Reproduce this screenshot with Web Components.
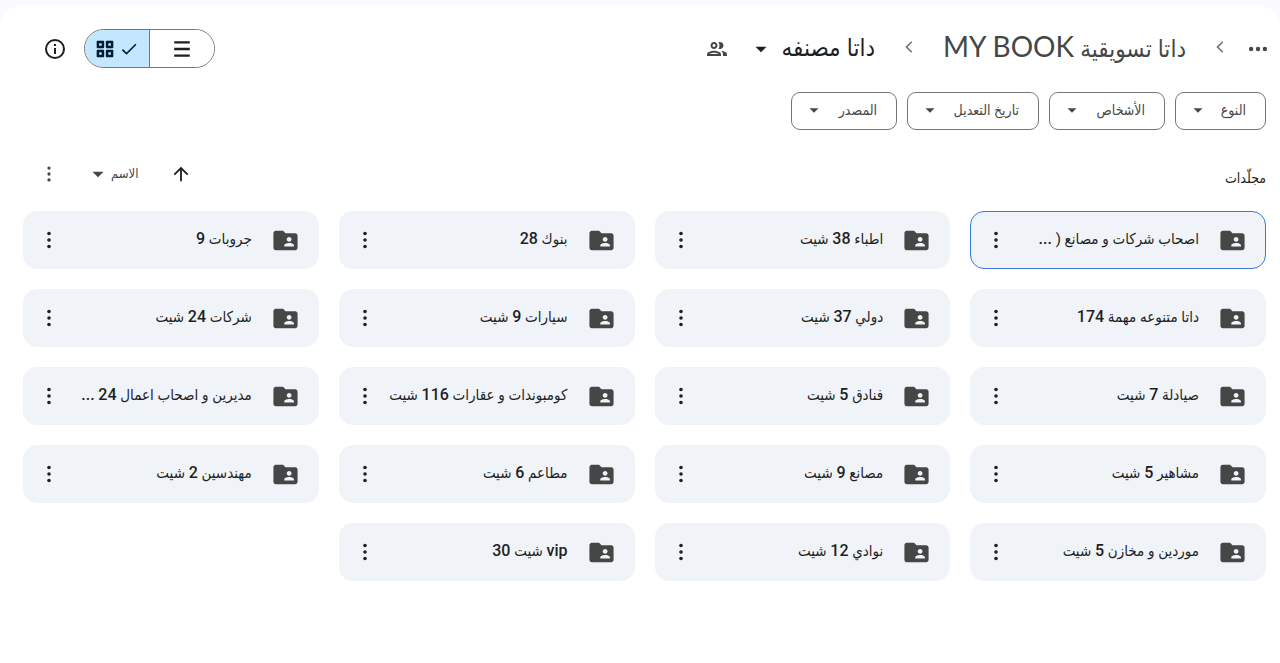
<!DOCTYPE html>
<html lang="ar" dir="rtl">
<head>
<meta charset="utf-8">
<meta name="viewport" content="width=device-width, initial-scale=1">
<title>داتا مصنفه</title>
<style>
  body { margin: 0; background: #f8fafd; color: #1f1f1f; font-family: Roboto, "DejaVu Sans Condensed", "DejaVu Sans", sans-serif; }
</style>
</head>
<body>
<drive-page></drive-page>
<script>
const ICONS = {
  more: '<circle cx="12" cy="5.5" r="1.8"/><circle cx="12" cy="12" r="1.8"/><circle cx="12" cy="18.5" r="1.8"/>',
  dots: '<circle cx="4.5" cy="12" r="2.4"/><circle cx="12" cy="12" r="2.4"/><circle cx="19.5" cy="12" r="2.4"/>',
  chevron: '<path d="M16 6.400 14.600 5l-7 7 7 7 1.400-1.400-5.600-5.600z"/>',
  caret: '<path d="M6 9.500h12l-6 6z"/>',
  people: '<path d="M9 13.750c-2.340 0-7 1.170-7 3.500V19h14v-1.750c0-2.330-4.660-3.500-7-3.500zM4.340 17c.84-.58 2.870-1.250 4.660-1.250s3.820.67 4.660 1.250zM9 12c1.930 0 3.500-1.570 3.500-3.500S10.930 5 9 5 5.500 6.570 5.500 8.500 7.070 12 9 12zm0-5c.83 0 1.500.67 1.500 1.500S9.830 10 9 10s-1.500-.67-1.500-1.500S8.170 7 9 7zM16.040 13.810c1.160.84 1.960 1.960 1.960 3.440V19h4v-1.750c0-2.020-3.500-3.170-5.960-3.440zM15 12c1.930 0 3.500-1.570 3.500-3.500S16.930 5 15 5c-.54 0-1.040.13-1.500.35.63.89 1 1.980 1 3.150s-.37 2.260-1 3.150c.46.22.96.35 1.500.35z"/>',
  info: '<path d="M11 7h2v2h-2zm0 4h2v6h-2zm1-9a10 10 0 1 0 0 20 10 10 0 0 0 0-20zm0 18a8 8 0 1 1 0-16 8 8 0 0 1 0 16z"/>',
  grid: '<path fill-rule="evenodd" d="M3 2h7a1 1 0 0 1 1 1v7a1 1 0 0 1-1 1H3a1 1 0 0 1-1-1V3a1 1 0 0 1 1-1zm2 3v3h3V5zM14 2h7a1 1 0 0 1 1 1v7a1 1 0 0 1-1 1h-7a1 1 0 0 1-1-1V3a1 1 0 0 1 1-1zm2 3v3h3V5zM3 13h7a1 1 0 0 1 1 1v7a1 1 0 0 1-1 1H3a1 1 0 0 1-1-1v-7a1 1 0 0 1 1-1zm2 3v3h3v-3zM14 13h7a1 1 0 0 1 1 1v7a1 1 0 0 1-1 1h-7a1 1 0 0 1-1-1v-7a1 1 0 0 1 1-1zm2 3v3h3v-3z"/>',
  check: '<path d="M9 16.170 4.830 12l-1.420 1.410L9 19 21 7l-1.410-1.410z"/>',
  list: '<path d="M3.500 3.500h17v2.600h-17zM3.500 10.700h17v2.600h-17zM3.500 17.900h17v2.600h-17z"/>',
  up: '<path d="m4 12 1.410 1.410L11 7.830V20h2V7.830l5.580 5.590L20 12l-8-8z"/>',
  folder: '<path d="M20 6h-8l-2-2H4c-1.100 0-1.990.9-1.990 2L2 18c0 1.100.9 2 2 2h16c1.100 0 2-.9 2-2V8c0-1.100-.9-2-2-2zm-5 3c1.100 0 2 .9 2 2s-.9 2-2 2-2-.9-2-2 .9-2 2-2zm4 8h-8v-1c0-1.330 2.670-2 4-2s4 .67 4 2v1z"/>'
};

class DriveElement extends HTMLElement {
  connectedCallback() {
    if (this.shadowRoot) return;
    this.attachShadow({ mode: 'open' }).innerHTML = this.render();
  }
}

customElements.define('drive-icon', class extends DriveElement {
  render() {
    const size = this.getAttribute('size') || 24;
    return `<style>:host{display:inline-flex;flex:none}svg{display:block;fill:currentColor}</style>
      <svg width="${size}" height="${size}" viewBox="0 0 24 24" aria-hidden="true">${ICONS[this.getAttribute('name')]}</svg>`;
  }
});

customElements.define('icon-button', class extends DriveElement {
  render() {
    return `<style>
      :host{display:inline-flex;flex:none}
      button{display:flex;align-items:center;justify-content:center;width:32px;height:32px;padding:0;border:0;border-radius:50%;background:none;color:inherit}
      </style><button type="button" aria-label="${this.getAttribute('label')}"><slot></slot></button>`;
  }
});

customElements.define('path-crumbs', class extends DriveElement {
  render() {
    return `<style>
      :host{display:block;min-width:0}
      nav{display:flex;align-items:center;color:#444746;white-space:nowrap}
      a{padding-bottom:4px;color:inherit;text-decoration:none;font:24px/36px Lato,"DejaVu Sans Condensed","DejaVu Sans",sans-serif}
      bdi{font-size:28px}
      .sep{margin-inline:12px 24px;padding-bottom:4px;color:#747775}
      .sep.last{margin-inline:24px}
      .here{color:#1f1f1f}
      .arrow{margin-inline:4px 16px;color:#1f1f1f}
      </style>
      <nav aria-label="المسار">
        <icon-button label="عرض المسار"><drive-icon name="dots" size="22"></drive-icon></icon-button>
        <drive-icon class="sep" name="chevron" size="20"></drive-icon>
        <a href="#">داتا تسويقية <bdi>MY BOOK</bdi></a>
        <drive-icon class="sep last" name="chevron" size="20"></drive-icon>
        <a class="here" href="#" aria-current="page">داتا مصنفه</a>
        <icon-button class="arrow" label="إجراءات المجلد"><drive-icon name="caret" size="22"></drive-icon></icon-button>
        <drive-icon name="people" size="24"></drive-icon>
      </nav>`;
  }
});

customElements.define('view-toggle', class extends DriveElement {
  render() {
    return `<style>
      :host{display:inline-flex}
      div{display:flex;height:37px;border:1px solid #747775;border-radius:20px;overflow:hidden}
      button{display:flex;box-sizing:border-box;align-items:center;justify-content:center;gap:4px;width:64px;padding:0;border:0;background:#fff;color:#1f1f1f}
      button[aria-pressed=true]{width:65px;background:#c2e7ff;color:#001d35;border-inline-start:1px solid #747775}
      </style>
      <div role="group" aria-label="طريقة العرض">
        <button type="button" aria-label="عرض القائمة" aria-pressed="false"><drive-icon name="list" size="22"></drive-icon></button>
        <button type="button" aria-label="عرض الشبكة" aria-pressed="true"><drive-icon name="check" size="20"></drive-icon><drive-icon name="grid" size="20"></drive-icon></button>
      </div>`;
  }
});

customElements.define('filter-chip', class extends DriveElement {
  render() {
    return `<style>
      :host{display:block}
      button{display:flex;align-items:center;justify-content:space-between;width:100%;height:38px;padding:0 19px 2px 13px;border:1px solid #747775;border-radius:9px;background:#fff;color:#444746;font:14px/20px Roboto,"DejaVu Sans Condensed","DejaVu Sans",sans-serif;white-space:nowrap}
      </style><button type="button" aria-haspopup="menu"><span><slot></slot></span><drive-icon name="caret" size="18"></drive-icon></button>`;
  }
});

customElements.define('folder-card', class extends DriveElement {
  render() {
    return `<style>
      :host{display:flex;align-items:center;height:58px;box-sizing:border-box;padding-inline:18px 9px;border:1px solid #f0f3f8;border-radius:14px;background:#f0f3f8;min-width:0}
      :host([selected]){border-color:#3b78e0}
      .icon{color:#444746}
      .name{flex:1;min-width:0;margin-inline-start:19px;color:#1f1f1f;text-decoration:none;font-size:15px;line-height:24px;padding-bottom:2px;white-space:nowrap;overflow:hidden;text-overflow:ellipsis}
      </style>
      <drive-icon class="icon" name="folder" size="29"></drive-icon>
      <a class="name" href="#"><slot></slot></a>
      <icon-button label="مزيد من الإجراءات"><drive-icon name="more" size="24"></drive-icon></icon-button>`;
  }
});

const FOLDERS = ['اصحاب شركات و مصانع ( ...', 'اطباء 38 شيت', 'بنوك 28', 'جروبات 9',
  'داتا متنوعه مهمة 174', 'دولي 37 شيت', 'سيارات 9 شيت', 'شركات 24 شيت',
  'صيادلة 7 شيت', 'فنادق 5 شيت', 'كومبوندات و عقارات 116 شيت', 'مديرين و اصحاب اعمال 24 ...',
  'مشاهير 5 شيت', 'مصانع 9 شيت', 'مطاعم 6 شيت', 'مهندسين 2 شيت',
  'موردين و مخازن 5 شيت', 'نوادي 12 شيت', 'vip شيت 30'];

customElements.define('drive-page', class extends DriveElement {
  render() {
    const cards = FOLDERS.map((name, i) =>
      `<folder-card${i ? '' : ' selected'}>${name.replace(/[a-z0-9]+|[.]+/g, '<span class="latin">$&</span>')}</folder-card>`).join('');
    return `<style>
      :host{display:block;padding-top:6px}
      main{box-sizing:border-box;min-height:calc(100vh - 6px);padding:23px 14px 24px 23px;border-radius:20px 20px 0 0;background:#fff}
      header,.tools,.chips,.listhead,.sort{display:flex;align-items:center}
      header{justify-content:space-between;height:39px;margin-inline-start:-8px}
      .tools{gap:13px;padding-left:16px}
      .chips{gap:10px;margin-top:24px}
      .listhead{justify-content:space-between;height:40px;margin-top:24px}
      h2{margin:8px 0 0;font-size:14px;line-height:20px;font-weight:400}
      .sort{color:#444746;font-size:13px;line-height:20px;padding-left:10px}
      .sort button{display:flex;align-items:center;gap:2px;padding:0;border:0;background:none;color:inherit;font:inherit;margin-inline:26px 22px}
      .grid{display:grid;grid-template-columns:repeat(4,minmax(0,1fr));gap:20px;margin-top:17px}
      .latin{font-size:16px;font-weight:500}
      </style>
      <main>
        <header>
          <path-crumbs></path-crumbs>
          <div class="tools"><view-toggle></view-toggle><icon-button label="عرض التفاصيل"><drive-icon name="info" size="24"></drive-icon></icon-button></div>
        </header>
        <div class="chips">
          <filter-chip style="width:91px">النوع</filter-chip>
          <filter-chip style="width:116px">الأشخاص</filter-chip>
          <filter-chip style="width:132px">تاريخ التعديل</filter-chip>
          <filter-chip style="width:106px">المصدر</filter-chip>
        </div>
        <div class="listhead">
          <h2>مجلّدات</h2>
          <div class="sort">
            <icon-button label="عكس ترتيب الفرز" style="color:#1f1f1f"><drive-icon name="up" size="22"></drive-icon></icon-button>
            <button type="button" aria-haspopup="menu">الاسم<drive-icon name="caret" size="22"></drive-icon></button>
            <icon-button label="المزيد"><drive-icon name="more" size="22"></drive-icon></icon-button>
          </div>
        </div>
        <div class="grid">${cards}</div>
      </main>`;
  }
});
</script>
</body>
</html>
